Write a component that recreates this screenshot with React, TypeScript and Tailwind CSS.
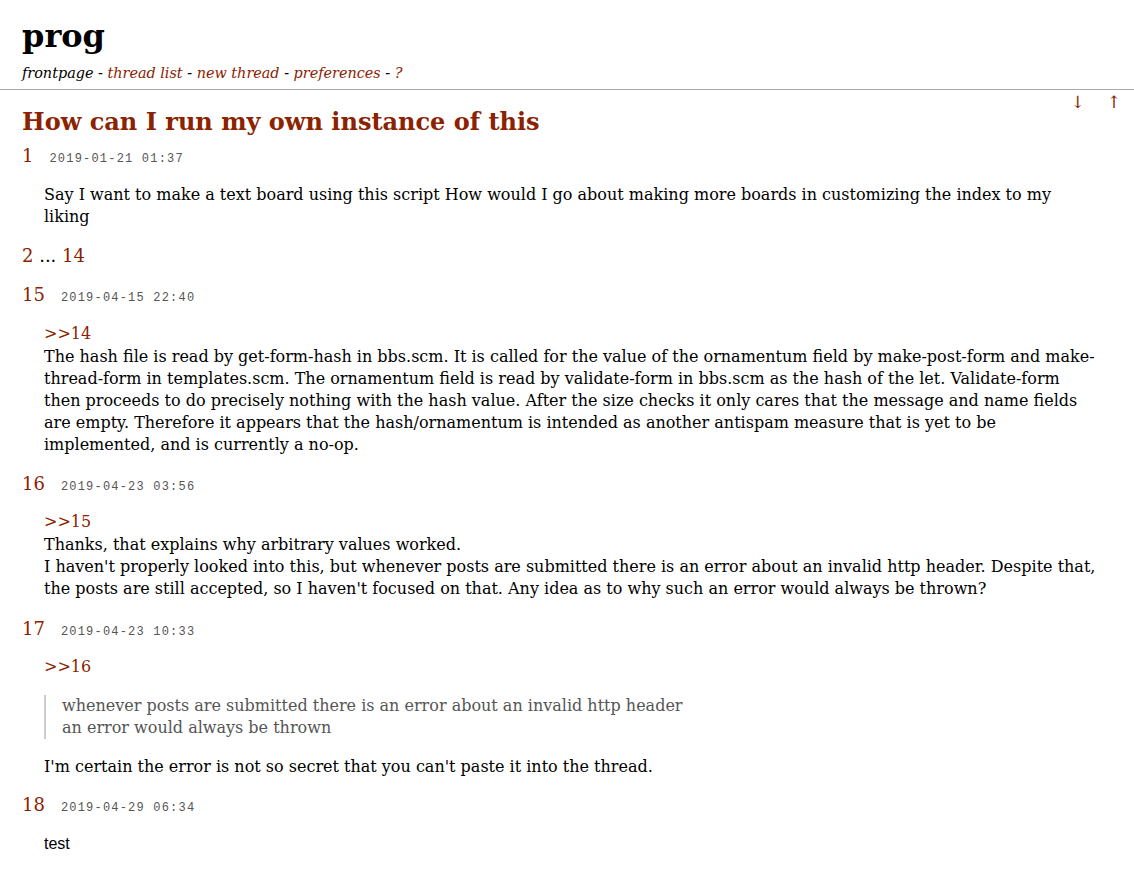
const serif = { fontFamily: '"DejaVu Serif", serif' }

const Link = ({ children }: { children: React.ReactNode }) => (
  <a href="#" className="text-[#8b2200] no-underline">
    {children}
  </a>
)

const PostHead = ({ n, date }: { n: string; date: string }) => (
  <div className="flex h-[22px] items-baseline leading-[22px]">
    <span className="text-[18px] text-[#8b2200]">{n}</span>
    <span className="ml-4 text-[12px] tracking-[1.2px] text-[#555]" style={{ fontFamily: '"Liberation Mono", monospace' }}>
      {date}
    </span>
  </div>
)

const App = () => {
  return (
    <div className="min-h-[869px] bg-white text-black" style={serif}>
      {/* header */}
      <div className="px-[22px]">
        <h1 className="mt-[17px] text-[32px] font-bold leading-[38px]">prog</h1>
        <nav className="mt-2 text-[14.4px] italic leading-5">
          frontpage - <Link>thread list</Link> - <Link>new thread</Link> - <Link>preferences</Link> - <Link>?</Link>
        </nav>
      </div>
      <hr className="mt-[6px] border-t border-[#aaa]" />

      {/* thread */}
      <div className="flow-root px-[22px]">
        <div className="float-right mt-[2px] mr-[-9px] flex gap-[22px] text-[17px] leading-5 text-[#8b2200]">
          <span>↓</span>
          <span>↑</span>
        </div>
        <h2 className="mt-[17px] text-[24px] font-bold leading-[30px] text-[#8b2200]">How can I run my own instance of this</h2>

        <div className="pr-[14px]">
          <div className="mt-2">
            <PostHead n="1" date="2019-01-21 01:37" />
            <div className="mt-[17px] pl-[22px] text-[16px] leading-[22px]">
              Say I want to make a text board using this script How would I go about making more boards in customizing the index to my liking
            </div>
          </div>

          <div className="mt-[17px] h-[22px] text-[18px] leading-[22px]">
            <Link>2</Link> ... <Link>14</Link>
          </div>

          <div className="mt-[17px]">
            <PostHead n="15" date="2019-04-15 22:40" />
            <div className="mt-[15px] pl-[22px] text-[16px] leading-[22px]">
              <div className="leading-[25px]">
                <Link>&gt;&gt;14</Link>
              </div>
              <p>
                The hash file is read by get-form-hash in bbs.scm. It is called for the value of the ornamentum field by make-post-form and make-thread-form in templates.scm. The ornamentum field is read by validate-form in bbs.scm as the hash of the let. Validate-form then proceeds to do precisely nothing with the hash value. After the size checks it only cares that the message and name fields are empty. Therefore it appears that the hash/ornamentum is intended as another antispam measure that is yet to be implemented, and is currently a no-op.
              </p>
            </div>
          </div>

          <div className="mt-[17px]">
            <PostHead n="16" date="2019-04-23 03:56" />
            <div className="mt-[15px] pl-[22px] text-[16px] leading-[22px]">
              <div className="leading-[24px]">
                <Link>&gt;&gt;15</Link>
              </div>
              <p>Thanks, that explains why arbitrary values worked.</p>
              <p>
                I haven't properly looked into this, but whenever posts are submitted there is an error about an invalid http header. Despite that, the posts are still accepted, so I haven't focused on that. Any idea as to why such an error would always be thrown?
              </p>
            </div>
          </div>

          <div className="mt-[18px]">
            <PostHead n="17" date="2019-04-23 10:33" />
            <div className="mt-[15px] pl-[22px] text-[16px] leading-[22px]">
              <div className="leading-[24px]">
                <Link>&gt;&gt;16</Link>
              </div>
              <blockquote className="mt-4 border-l-2 border-[#ccc] pl-4 text-[#555]">
                whenever posts are submitted there is an error about an invalid http header
                <br />
                an error would always be thrown
              </blockquote>
              <p className="mt-[17px]">I'm certain the error is not so secret that you can't paste it into the thread.</p>
            </div>
          </div>

          <div className="mt-4">
            <PostHead n="18" date="2019-04-29 06:34" />
            <div className="mt-[17px] pl-[22px] text-[16px] leading-[22px]" style={{ fontFamily: '"Liberation Sans", sans-serif' }}>
              test
            </div>
          </div>
        </div>
      </div>
    </div>
  )
}

export default App
